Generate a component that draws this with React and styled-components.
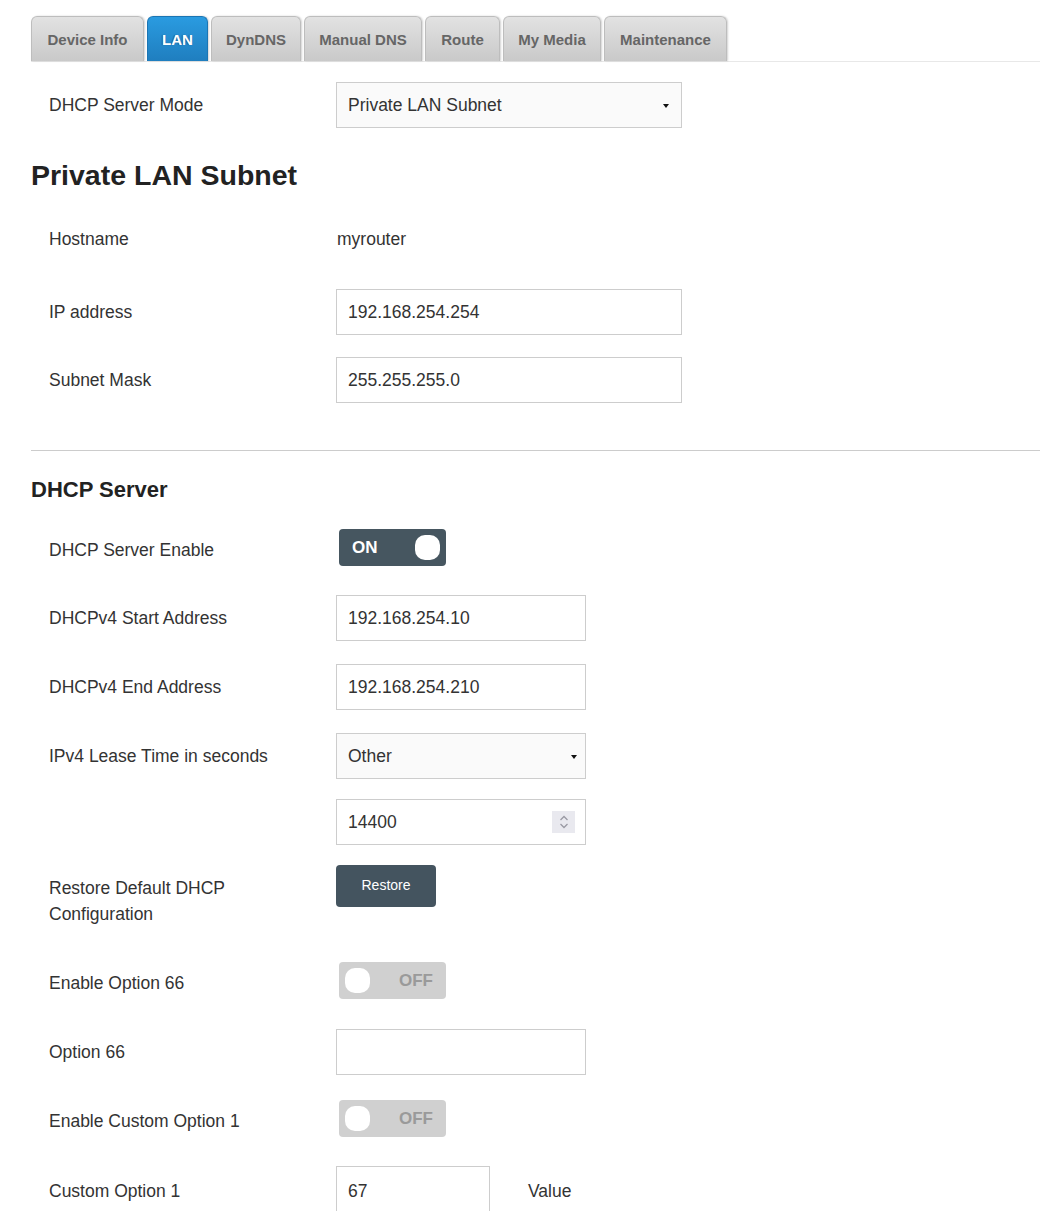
import React from 'react';
import styled, { createGlobalStyle } from 'styled-components';

const tabs = [
  { name: 'Device Info', w: 113 },
  { name: 'LAN', w: 61 },
  { name: 'DynDNS', w: 90 },
  { name: 'Manual DNS', w: 118 },
  { name: 'Route', w: 75 },
  { name: 'My Media', w: 98 },
  { name: 'Maintenance', w: 123 },
];

function Toggle({ on }) {
  return (
    <ToggleBox $on={on}>
      {on ? (
        <>
          <ToggleText $on>ON</ToggleText>
          <Knob />
        </>
      ) : (
        <>
          <Knob />
          <ToggleText>OFF</ToggleText>
        </>
      )}
    </ToggleBox>
  );
}

function Spinner() {
  return (
    <SpinBox>
      <svg width="12" height="16" viewBox="0 0 12 16" fill="none" stroke="#9a9aa4" strokeWidth="1.3">
        <path d="M2.5 6 L6 2.5 L9.5 6" />
        <path d="M2.5 10 L6 13.5 L9.5 10" />
      </svg>
    </SpinBox>
  );
}

export default function App() {
  return (
    <>
      <GlobalStyle />
      <Page>
        <TabBar>
          {tabs.map(t => (
            <TabItem key={t.name} $w={t.w} $active={t.name === 'LAN'}>
              {t.name}
            </TabItem>
          ))}
        </TabBar>

        <Row $top={20}>
          <Label>DHCP Server Mode</Label>
          <Select $w={346} $arrow={12}>Private LAN Subnet</Select>
        </Row>

        <Title>Private LAN Subnet</Title>

        <Row $top={25}>
          <Label>Hostname</Label>
          <Value>myrouter</Value>
        </Row>
        <Row $top={27}>
          <Label>IP address</Label>
          <Input $w={346}>192.168.254.254</Input>
        </Row>
        <Row $top={22}>
          <Label>Subnet Mask</Label>
          <Input $w={346}>255.255.255.0</Input>
        </Row>

        <Divider />

        <SubTitle>DHCP Server</SubTitle>

        <Row $top={25}>
          <Label>DHCP Server Enable</Label>
          <Toggle on />
        </Row>
        <Row $top={22}>
          <Label>DHCPv4 Start Address</Label>
          <Input $w={250}>192.168.254.10</Input>
        </Row>
        <Row $top={23}>
          <Label>DHCPv4 End Address</Label>
          <Input $w={250}>192.168.254.210</Input>
        </Row>
        <Row $top={23}>
          <Label>IPv4 Lease Time in seconds</Label>
          <Select $w={250} $arrow={8}>Other</Select>
        </Row>
        <Row $top={20}>
          <Label />
          <Input $w={250}>
            14400
            <Spinner />
          </Input>
        </Row>
        <Row $top={20} $start>
          <Label $wrap>
            Restore Default DHCP
            <br />
            Configuration
          </Label>
          <Button>Restore</Button>
        </Row>
        <Row $top={33}>
          <Label>Enable Option 66</Label>
          <Toggle />
        </Row>
        <Row $top={23}>
          <Label>Option 66</Label>
          <Input $w={250} />
        </Row>
        <Row $top={23}>
          <Label>Enable Custom Option 1</Label>
          <Toggle />
        </Row>
        <Row $top={22}>
          <Label>Custom Option 1</Label>
          <Input $w={154} $noBottom>67</Input>
          <SideLabel>Value</SideLabel>
        </Row>
      </Page>
    </>
  );
}

const GlobalStyle = createGlobalStyle`
  html, body {
    margin: 0;
    padding: 0;
    background: #fff;
  }
  body {
    font-family: "Liberation Sans", Arial, sans-serif;
    color: #333;
    overflow: hidden;
  }
`;

const Page = styled.div`
  padding: 16px 0 0 31px;
  height: 1195px;
  overflow: hidden;
`;

const TabBar = styled.div`
  display: flex;
  gap: 3px;
  height: 45px;
  border-bottom: 1px solid #e8e8e8;
`;

const TabItem = styled.div`
  display: flex;
  align-items: center;
  justify-content: center;
  width: ${p => p.$w}px;
  height: 45px;
  box-sizing: border-box;
  border: 1px solid ${p => (p.$active ? '#1b75b3' : '#bdbdbd')};
  border-bottom: none;
  border-radius: 6px 6px 0 0;
  background: ${p =>
    p.$active
      ? 'linear-gradient(to bottom, #2a9be0, #1f7ebf)'
      : 'linear-gradient(to bottom, #e2e2e2, #c9c9c9)'};
  box-shadow: 1px 0 2px rgba(0, 0, 0, 0.18);
  color: ${p => (p.$active ? '#fff' : '#666')};
  text-shadow: ${p => (p.$active ? '-1px 0 1px rgba(0,0,0,0.35)' : 'none')};
  font-size: 15px;
  font-weight: 700;
`;

const Row = styled.div`
  display: flex;
  align-items: ${p => (p.$start ? 'flex-start' : 'center')};
  min-height: 46px;
  margin-top: ${p => p.$top}px;
`;

const Label = styled.div`
  width: 287px;
  padding-left: 18px;
  flex-shrink: 0;
  font-size: 17.5px;
  line-height: 26px;
  color: #333;
  padding-top: ${p => (p.$wrap ? '10px' : '0')};
`;

const Value = styled.div`
  font-size: 17.5px;
  color: #333;
  padding-left: 1px;
`;

const Input = styled.div`
  position: relative;
  width: ${p => p.$w}px;
  height: ${p => (p.$noBottom ? 50 : 46)}px;
  box-sizing: border-box;
  border: 1px solid #cdcdcd;
  border-bottom: ${p => (p.$noBottom ? 'none' : '1px solid #cdcdcd')};
  background: #fff;
  display: flex;
  align-items: center;
  padding: 0 11px;
  font-size: 17.5px;
  color: #333;
  align-self: flex-start;
`;

const Select = styled(Input)`
  background: #fafafa;
  &::after {
    content: '';
    position: absolute;
    right: ${p => p.$arrow}px;
    top: 21px;
    border-left: 3px solid transparent;
    border-right: 3px solid transparent;
    border-top: 4px solid #111;
  }
`;

const SpinBox = styled.div`
  position: absolute;
  right: 10px;
  top: 11px;
  width: 23px;
  height: 22px;
  background: #e9e9ef;
  display: flex;
  align-items: center;
  justify-content: center;
`;

const Title = styled.h1`
  margin: 31px 0 0;
  font-size: 28.5px;
  line-height: 32px;
  font-weight: 700;
  color: #222;
`;

const SubTitle = styled.h2`
  margin: 27px 0 0;
  font-size: 22px;
  line-height: 24px;
  font-weight: 700;
  color: #222;
`;

const Divider = styled.hr`
  margin: 47px 0 0;
  border: none;
  border-top: 1px solid #cccccc;
`;

const ToggleBox = styled.div`
  align-self: flex-start;
  margin: 2px 0 0 3px;
  width: 107px;
  height: 37px;
  box-sizing: border-box;
  border-radius: 4px;
  background: ${p => (p.$on ? '#465660' : '#d0d0d0')};
  display: flex;
  align-items: center;
  justify-content: space-between;
  padding-left: ${p => (p.$on ? '13px' : '6px')};
  padding-right: ${p => (p.$on ? '6px' : '13px')};
`;

const ToggleText = styled.span`
  font-size: 17px;
  font-weight: 700;
  color: ${p => (p.$on ? '#fff' : '#9a9a9a')};
`;

const Knob = styled.span`
  width: 25px;
  height: 25px;
  border-radius: 10px;
  background: #fff;
`;

const Button = styled.button`
  width: 100px;
  height: 42px;
  border: none;
  border-radius: 4px;
  background: #44545f;
  color: #fff;
  font-family: "Liberation Sans", Arial, sans-serif;
  font-size: 14px;
  padding: 0 0 3px;
`;

const SideLabel = styled.div`
  margin-left: 38px;
  font-size: 17.5px;
  color: #333;
`;
